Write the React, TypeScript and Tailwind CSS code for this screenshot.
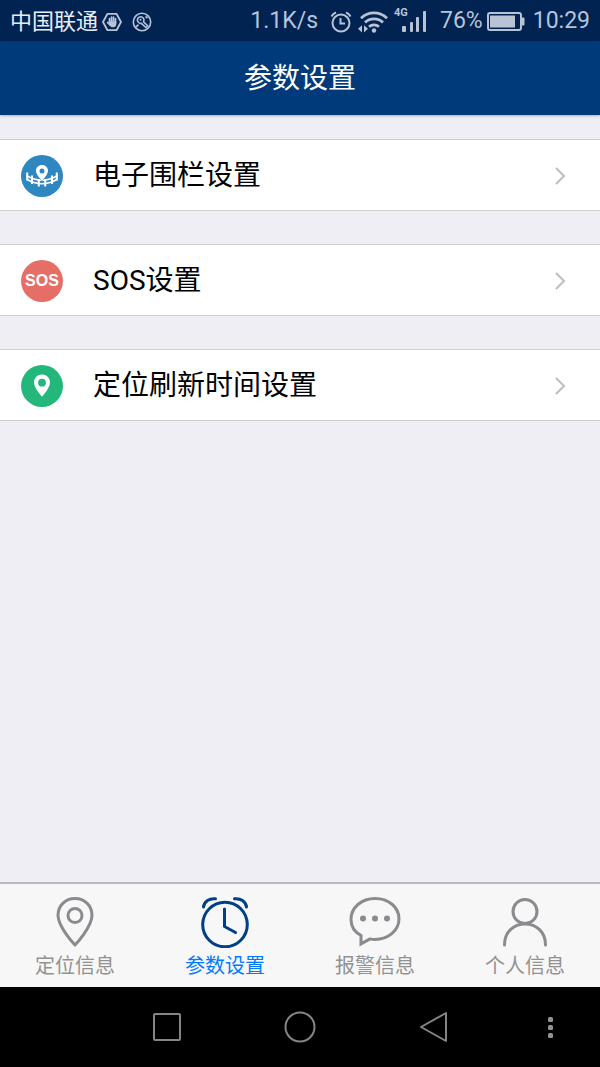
import type { ReactNode } from "react";

function FenceIcon() {
  return (
    <svg viewBox="0 0 42 42" className="size-[42px]" aria-hidden="true">
      <circle cx="21" cy="21" r="21" fill="#2e87c1" />
      <g fill="none" stroke="#fff">
        <path
          strokeWidth="1.500"
          d="M5.500 20.500c4 2.600 9 4.700 15.500 4.700s11.500-2.100 15.500-4.700M5.500 24c4 2.600 9 4.700 15.500 4.700s11.500-2.100 15.500-4.700"
        />
        <path strokeWidth="2" d="M6.200 17.500v8M11 20.500v8.500M17.800 24v7.500M24.200 24v7.500M31 20.500v8.500M35.800 17.500v8" />
      </g>
      <path
        fill="#fff"
        stroke="#2e87c1"
        strokeWidth="1"
        paintOrder="stroke"
        fillRule="evenodd"
        d="M21 10c-3.500 0-6 2.500-6 5.800 0 4.200 6 9.700 6 9.700s6-5.500 6-9.700c0-3.300-2.500-5.800-6-5.800zm0 3.500a2.500 2.500 0 1 1 0 5 2.500 2.500 0 0 1 0-5z"
      />
    </svg>
  );
}

function SosIcon() {
  return (
    <span
      aria-hidden="true"
      className="flex size-[42px] items-center justify-center rounded-full bg-[#e56f66] font-['Liberation_Sans'] text-[16px] font-bold text-white"
    >
      SOS
    </span>
  );
}

function RefreshPinIcon() {
  return (
    <svg viewBox="0 0 42 42" className="size-[42px]" aria-hidden="true">
      <circle cx="21" cy="21" r="21" fill="#24b77c" />
      <path
        fill="#fff"
        fillRule="evenodd"
        d="M21 9.500c-4.500 0-8 3.500-8 7.900 0 5.600 8 14.100 8 14.100s8-8.500 8-14.100c0-4.400-3.500-7.900-8-7.900zm0 4.300a3.900 3.900 0 1 1 0 7.800 3.900 3.900 0 0 1 0-7.800z"
      />
    </svg>
  );
}

const settings: { label: string; href: string; icon: ReactNode }[] = [
  { label: "电子围栏设置", href: "#fence", icon: <FenceIcon /> },
  { label: "SOS设置", href: "#sos", icon: <SosIcon /> },
  { label: "定位刷新时间设置", href: "#refresh", icon: <RefreshPinIcon /> },
];

const tabs: { label: string; href: string; active?: boolean; icon: ReactNode }[] = [
  {
    label: "定位信息",
    href: "#location",
    icon: (
      <>
        <path d="M26 2.500c-9.800 0-17 7.400-17 16.700C9 31 26 49 26 49s17-18 17-29.800C43 9.900 35.800 2.500 26 2.500z" />
        <circle cx="26" cy="19.500" r="7" />
      </>
    ),
  },
  {
    label: "参数设置",
    href: "#settings",
    active: true,
    icon: (
      <>
        <circle cx="26" cy="28.500" r="22.300" />
        <path d="M25.500 13v17.500l11 6M4.500 11c.7-5.500 6-9 12-8.200M47.500 11c-.7-5.500-6-9-12-8.200" />
      </>
    ),
  },
  {
    label: "报警信息",
    href: "#alarm",
    icon: (
      <>
        <path
          strokeLinejoin="miter"
          d="M12 39.500C5.500 36 2 30 2 23.500 2 11.500 12.500 2.500 26 2.500s24 8.600 24 20.200S39.500 43.500 26 43.500q-2.500 0-5-.6l-9 5z"
        />
        <g fill="currentColor" stroke="none">
          <circle cx="14" cy="22.500" r="3" />
          <circle cx="26" cy="22.500" r="3" />
          <circle cx="38" cy="22.500" r="3" />
        </g>
      </>
    ),
  },
  {
    label: "个人信息",
    href: "#profile",
    icon: (
      <>
        <circle cx="26" cy="15.500" r="12" />
        <path d="M5.500 49C5.500 36 14.500 28 26 28s20.500 8 20.500 21" />
      </>
    ),
  },
];

function StatusBar() {
  return (
    <div className="flex h-[41px] items-center bg-[#002352] px-[10px] pt-[2px] text-[23px] text-[#b9c3d6]">
      <span className="text-[22px] text-[#e8ecf3]">中国联通</span>
      <svg viewBox="0 0 20 20" className="ml-1 size-5" aria-hidden="true">
        <path d="M5.500 1.800h9L19 10l-4.500 8.200h-9L1 10z" fill="none" stroke="currentColor" strokeWidth="1.800" strokeLinejoin="round" />
        <path
          d="M7.500 11V6.500M9.500 10V5M11.500 10V5M13.500 11V6.500M5.500 10.500l2.500 2.500"
          stroke="currentColor"
          strokeWidth="1.700"
          strokeLinecap="round"
        />
        <path d="M6.700 9.500h7.600V12c0 2-1.300 3.300-3.300 3.300S8 14.500 6.700 12z" fill="currentColor" />
      </svg>
      <svg viewBox="0 0 20 20" className="ml-[10px] size-5" fill="none" stroke="currentColor" strokeWidth="1.600" aria-hidden="true">
        <circle cx="10" cy="10" r="8.700" />
        <path d="M11.500 9.800a3.300 3.300 0 1 0-2.200 1.500l4.500 4.200 1.800-1.800z" />
        <circle cx="8.500" cy="7.800" r="1" fill="currentColor" stroke="none" />
        <path d="M3.800 15.200l2.700-2.500M13.500 4.500l2 1.500" />
      </svg>
      <span className="ml-auto">1.1K/s</span>
      <svg viewBox="0 0 22 22" className="ml-3 size-[22px]" fill="none" stroke="currentColor" strokeWidth="2" aria-hidden="true">
        <circle cx="11" cy="12" r="8.500" />
        <path d="M10.500 7v5.500H15M1.500 5.500Q3 2.500 6 1.500M20.500 5.500Q19 2.500 16 1.500" />
      </svg>
      <svg viewBox="0 0 30 24" className="ml-[6px] h-6 w-[30px]" fill="none" stroke="currentColor" strokeWidth="2.800" aria-hidden="true">
        <path d="M3 8.200a18.500 18.500 0 0 1 26 0M7 12.500a13 13 0 0 1 18 0M11 16.800a7.500 7.500 0 0 1 10 0" />
        <circle cx="16" cy="20.500" r="2.200" fill="currentColor" stroke="none" />
        <path d="M0 18.800l4-3.600v7.200zM10 18.800l-4-3.600v7.200z" fill="currentColor" stroke="none" />
      </svg>
      <span className="relative mb-1 ml-[6px] flex h-[26px] w-[34px] items-end justify-end">
        <span className="absolute top-0 left-0 text-[11px] leading-none font-bold">4G</span>
        <svg viewBox="0 0 26 22" className="h-[22px] w-[26px]" fill="currentColor" aria-hidden="true">
          <rect x="0" y="15" width="4" height="6" rx="1" />
          <rect x="8" y="11" width="3" height="10" rx="1" />
          <rect x="14" y="6" width="3" height="15" rx="1" />
          <rect x="21" y="0" width="3" height="21" rx="1" />
        </svg>
      </span>
      <span className="ml-3">76%</span>
      <svg viewBox="0 0 38 20" className="ml-1 h-5 w-[38px]" aria-hidden="true">
        <rect x="1" y="1" width="33" height="17" rx="2" fill="none" stroke="currentColor" strokeWidth="2" />
        <rect x="3" y="3.500" width="25" height="12" fill="currentColor" />
        <path d="M35 5.500h1.500q1 0 1 1v6q0 1-1 1H35z" fill="currentColor" />
      </svg>
      <span className="ml-2">10:29</span>
    </div>
  );
}

function SystemNav() {
  const shape = "size-9 fill-none stroke-[#858585] stroke-2";
  return (
    <div className="grid h-20 grid-cols-18 place-items-center bg-black">
      <button type="button" aria-label="最近任务" className="col-span-4 col-start-4">
        <svg viewBox="0 0 36 36" className={shape}>
          <rect x="5" y="5" width="26" height="26" rx="1" />
        </svg>
      </button>
      <button type="button" aria-label="主屏幕" className="col-span-4">
        <svg viewBox="0 0 36 36" className={shape}>
          <circle cx="18" cy="18" r="14.500" />
        </svg>
      </button>
      <button type="button" aria-label="返回" className="col-span-4">
        <svg viewBox="0 0 36 36" className={shape} strokeLinejoin="round">
          <path d="M31 4v28L6 18z" />
        </svg>
      </button>
      <button type="button" aria-label="更多" className="col-span-3">
        <svg viewBox="0 0 36 36" className="size-9 fill-[#929292]">
          <rect x="16" y="8" width="5" height="5" rx="1.500" />
          <rect x="16" y="16" width="5" height="5" rx="1.500" />
          <rect x="16" y="24" width="5" height="5" rx="1.500" />
        </svg>
      </button>
    </div>
  );
}

export default function App() {
  return (
    <div className="flex min-h-screen flex-col bg-[#efeef4] font-[Roboto,'Noto_Sans_CJK_SC',sans-serif]">
      <StatusBar />
      <header className="flex h-[74px] items-center justify-center bg-[#003a7a] pt-[2px] shadow-sm shadow-black/20">
        <h1 className="text-[28px] text-white">参数设置</h1>
      </header>

      <main className="flex-1 pt-6">
        <ul className="flex flex-col gap-[33px]">
          {settings.map((item) => (
            <li key={item.href}>
              <a
                href={item.href}
                className="flex h-[72px] items-center border-y border-[#cfced3] bg-white pt-[2px] pr-[34px] pl-[21px] text-[28px] text-black"
              >
                {item.icon}
                <span className="ml-[30px] flex-1">{item.label}</span>
                <svg viewBox="0 0 12 18" className="h-[18px] w-3 fill-none stroke-[#bdbdbd] stroke-2" aria-hidden="true">
                  <path d="M2 1l8 8-8 8" />
                </svg>
              </a>
            </li>
          ))}
        </ul>
      </main>

      <nav className="grid h-[105px] grid-cols-4 border-t-2 border-[#b9b8bd] bg-[#f7f7f7]">
        {tabs.map((tab) => (
          <a
            key={tab.href}
            href={tab.href}
            aria-current={tab.active ? "page" : undefined}
            className="flex flex-col items-center pt-3"
          >
            <svg
              viewBox="0 0 52 52"
              className={tab.active ? "size-[52px] text-[#003f85]" : "size-[52px] text-[#8a8a8f]"}
              fill="none"
              stroke="currentColor"
              strokeWidth="3"
              strokeLinecap="round"
              strokeLinejoin="round"
              aria-hidden="true"
            >
              {tab.icon}
            </svg>
            <span className={tab.active ? "mt-[6px] text-[20px] leading-6 text-[#007aff]" : "mt-[6px] text-[20px] leading-6 text-[#929292]"}>
              {tab.label}
            </span>
          </a>
        ))}
      </nav>
      <SystemNav />
    </div>
  );
}
